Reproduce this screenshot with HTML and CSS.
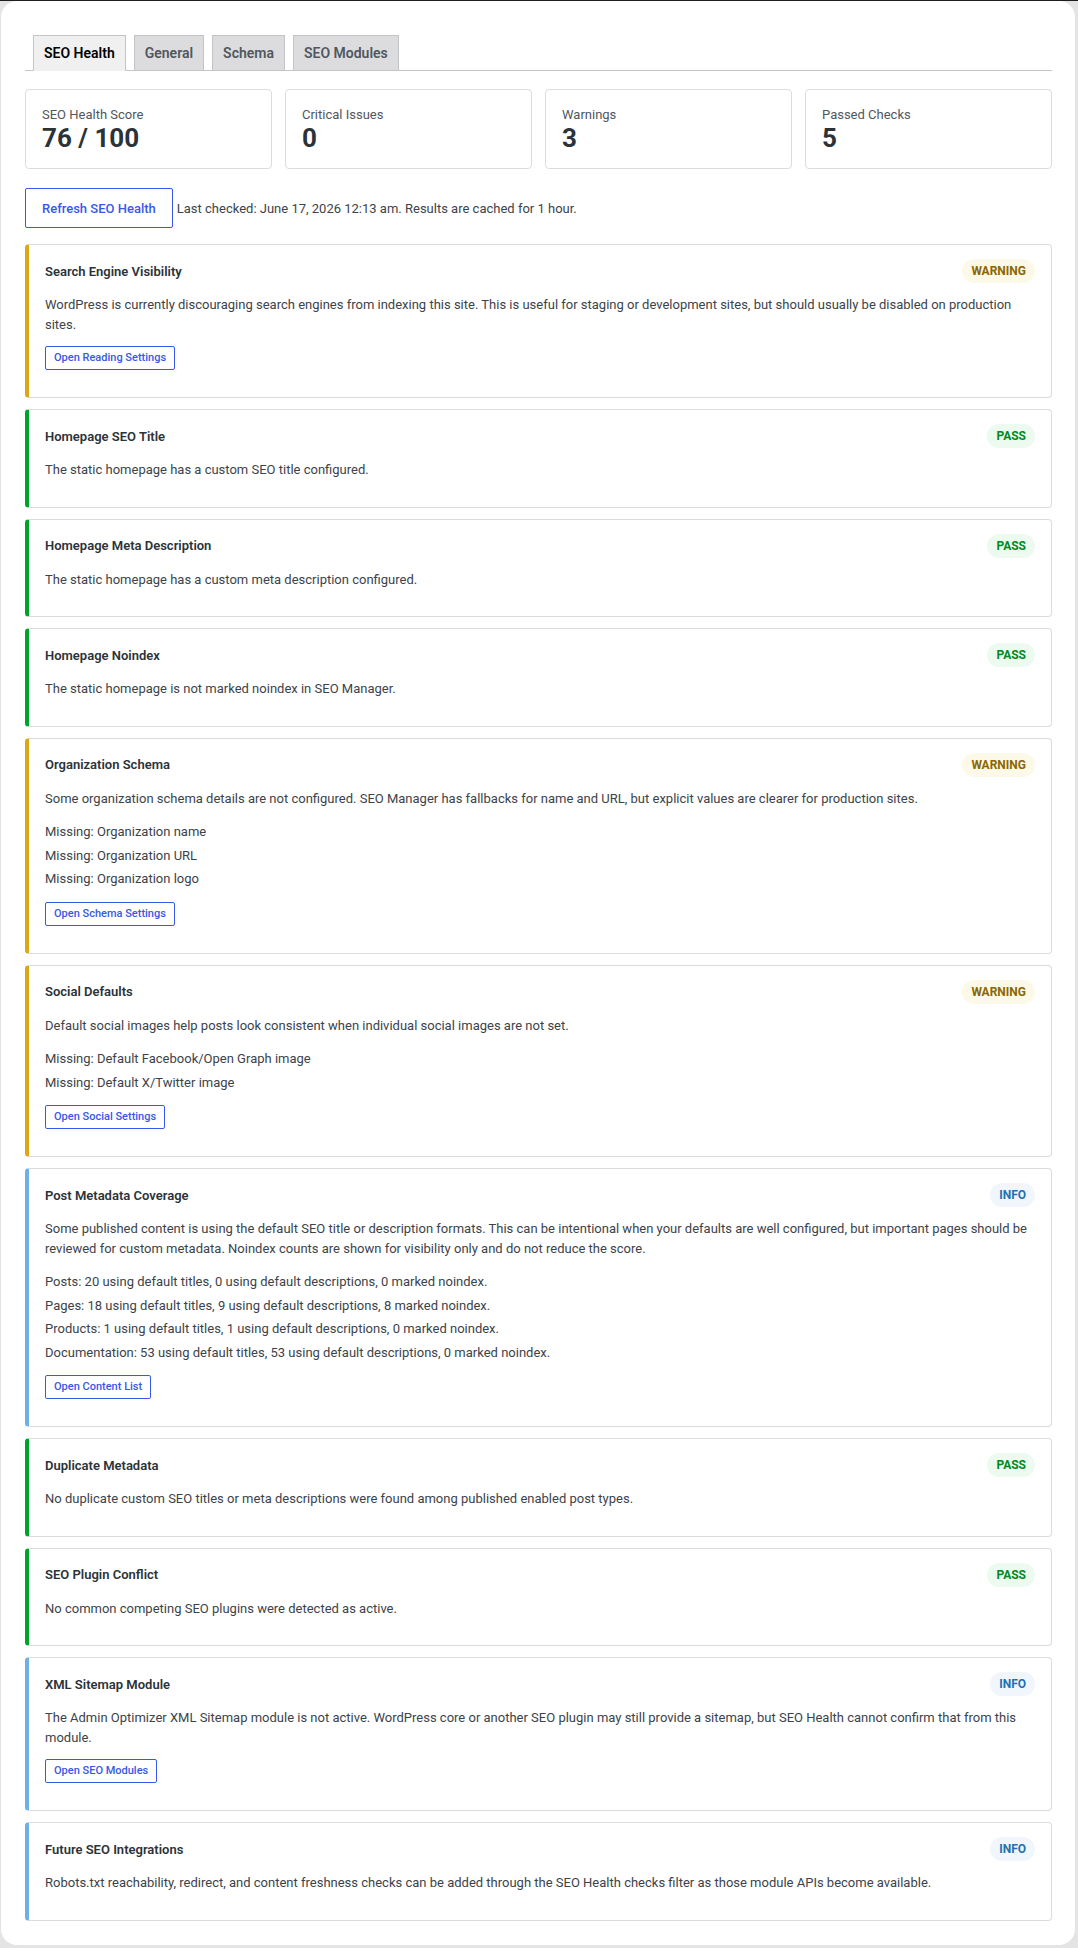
FILE: index.html
```html
<!DOCTYPE html>
<html lang="en">
<head>
  <meta charset="UTF-8">
  <title>SEO Health</title>
  <link rel="stylesheet" href="styles.css">
</head>
<body>
<div class="wrap">
  <nav class="tabs">
    <a class="tab active" href="#">SEO Health</a>
    <a class="tab" href="#">General</a>
    <a class="tab" href="#">Schema</a>
    <a class="tab" href="#">SEO Modules</a>
  </nav>

  <div class="stats">
    <div class="stat"><div class="stat-label">SEO Health Score</div><div class="stat-value">76 / 100</div></div>
    <div class="stat"><div class="stat-label">Critical Issues</div><div class="stat-value">0</div></div>
    <div class="stat"><div class="stat-label">Warnings</div><div class="stat-value">3</div></div>
    <div class="stat"><div class="stat-label">Passed Checks</div><div class="stat-value">5</div></div>
  </div>

  <div class="toolbar">
    <button class="btn">Refresh SEO Health</button>
    <span class="checked">Last checked: June 17, 2026 12:13 am. Results are cached for 1 hour.</span>
  </div>

  <div class="check warning">
    <div class="check-head"><h3>Search Engine Visibility</h3><span class="badge">Warning</span></div>
    <p>WordPress is currently discouraging search engines from indexing this site. This is useful for staging or development sites, but should usually be disabled on production sites.</p>
    <a class="btn-small" href="#">Open Reading Settings</a>
  </div>

  <div class="check pass">
    <div class="check-head"><h3>Homepage SEO Title</h3><span class="badge">Pass</span></div>
    <p>The static homepage has a custom SEO title configured.</p>
  </div>

  <div class="check pass">
    <div class="check-head"><h3>Homepage Meta Description</h3><span class="badge">Pass</span></div>
    <p>The static homepage has a custom meta description configured.</p>
  </div>

  <div class="check pass">
    <div class="check-head"><h3>Homepage Noindex</h3><span class="badge">Pass</span></div>
    <p>The static homepage is not marked noindex in SEO Manager.</p>
  </div>

  <div class="check warning">
    <div class="check-head"><h3>Organization Schema</h3><span class="badge">Warning</span></div>
    <p>Some organization schema details are not configured. SEO Manager has fallbacks for name and URL, but explicit values are clearer for production sites.</p>
    <ul>
      <li>Missing: Organization name</li>
      <li>Missing: Organization URL</li>
      <li>Missing: Organization logo</li>
    </ul>
    <a class="btn-small" href="#">Open Schema Settings</a>
  </div>

  <div class="check warning">
    <div class="check-head"><h3>Social Defaults</h3><span class="badge">Warning</span></div>
    <p>Default social images help posts look consistent when individual social images are not set.</p>
    <ul>
      <li>Missing: Default Facebook/Open Graph image</li>
      <li>Missing: Default X/Twitter image</li>
    </ul>
    <a class="btn-small" href="#">Open Social Settings</a>
  </div>

  <div class="check info">
    <div class="check-head"><h3>Post Metadata Coverage</h3><span class="badge">Info</span></div>
    <p>Some published content is using the default SEO title or description formats. This can be intentional when your defaults are well configured, but important pages should be reviewed for custom metadata. Noindex counts are shown for visibility only and do not reduce the score.</p>
    <ul>
      <li>Posts: 20 using default titles, 0 using default descriptions, 0 marked noindex.</li>
      <li>Pages: 18 using default titles, 9 using default descriptions, 8 marked noindex.</li>
      <li>Products: 1 using default titles, 1 using default descriptions, 0 marked noindex.</li>
      <li>Documentation: 53 using default titles, 53 using default descriptions, 0 marked noindex.</li>
    </ul>
    <a class="btn-small" href="#">Open Content List</a>
  </div>

  <div class="check pass">
    <div class="check-head"><h3>Duplicate Metadata</h3><span class="badge">Pass</span></div>
    <p>No duplicate custom SEO titles or meta descriptions were found among published enabled post types.</p>
  </div>

  <div class="check pass">
    <div class="check-head"><h3>SEO Plugin Conflict</h3><span class="badge">Pass</span></div>
    <p>No common competing SEO plugins were detected as active.</p>
  </div>

  <div class="check info">
    <div class="check-head"><h3>XML Sitemap Module</h3><span class="badge">Info</span></div>
    <p>The Admin Optimizer XML Sitemap module is not active. WordPress core or another SEO plugin may still provide a sitemap, but SEO Health cannot confirm that from this module.</p>
    <a class="btn-small" href="#">Open SEO Modules</a>
  </div>

  <div class="check info">
    <div class="check-head"><h3>Future SEO Integrations</h3><span class="badge">Info</span></div>
    <p>Robots.txt reachability, redirect, and content freshness checks can be added through the SEO Health checks filter as those module APIs become available.</p>
  </div>
</div>
</body>
</html>
```

FILE: styles.css
```css
*{box-sizing:border-box;}
body{margin:0;background:#e4e4e4;border-top:1px solid #1e1e1e;font-family:Roboto,"Liberation Sans",sans-serif;font-size:13px;color:#3c434a;}
.wrap{margin:0 3px 2px 1px;background:#fff;border-radius:16px;padding:34px 23px 24px 24px;}

.tabs{display:flex;border-bottom:1px solid #c3c4c7;}
.tab{margin:0 0 -1px 8px;padding:5px 10px;border:1px solid #c3c4c7;background:#dcdcde;color:#50575e;font-size:14px;font-weight:600;line-height:24px;text-decoration:none;}
.tab.active{background:#f0f0f1;border-bottom-color:#f0f0f1;color:#000;}

.stats{display:grid;grid-template-columns:repeat(4,1fr);gap:13px;margin-top:18px;}
.stat{border:1px solid #dcdcde;border-radius:4px;padding:16px;}
.stat-label{font-size:13px;line-height:18px;color:#50575e;}
.stat-value{font-size:26px;font-weight:700;line-height:28px;color:#2c3338;}

.toolbar{display:flex;align-items:center;gap:4px;margin:19px 0 16px;}
.btn{height:40px;padding:0 16px;border:1px solid #3858e9;border-radius:2px;background:#fff;color:#3858e9;font-family:inherit;font-size:13px;font-weight:500;}
.checked{color:#3c434a;}

.check{border:1px solid #dcdcde;border-left:4px solid #72aee6;border-radius:4px;padding:14px 16px 15px;margin-bottom:11px;}
.check:last-child{margin-bottom:0;}
.check.warning{border-left-color:#dba617;}
.check.pass{border-left-color:#00a32a;}
.check-head{display:flex;align-items:center;justify-content:space-between;margin-bottom:12px;}
.check h3{margin:0;font-size:13px;font-weight:600;color:#2c3338;}
.check p{margin:0 0 12px;line-height:19.5px;}
.check ul{margin:14px 0 13px;padding:0;list-style:none;}
.check li{margin:0 0 4px;line-height:19.5px;}

.badge{display:inline-block;height:24px;line-height:24px;padding:0 9px;border-radius:12px;font-size:12px;font-weight:700;text-transform:uppercase;background:#f0f6fc;color:#2271b1;}
.warning .badge{background:#fcf9e8;color:#8a6700;}
.pass .badge{background:#edfaef;color:#008a20;}

.btn-small{display:inline-block;height:24px;line-height:22px;padding:0 8px;margin-bottom:12px;border:1px solid #3858e9;border-radius:2px;color:#3858e9;font-size:11px;font-weight:500;text-decoration:none;}
```
